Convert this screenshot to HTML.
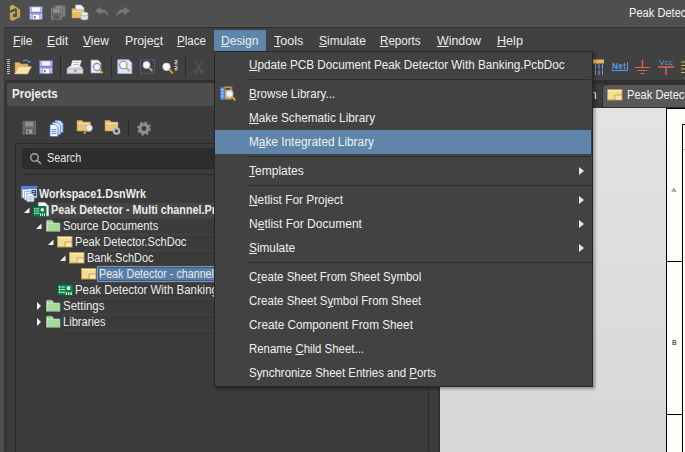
<!DOCTYPE html>
<html><head><meta charset="utf-8">
<style>
*{box-sizing:border-box;margin:0;padding:0}
html,body{width:685px;height:452px;overflow:hidden;background:#3c3c3c;font-family:"Liberation Sans","DejaVu Sans",sans-serif;font-size:12px;color:#e6e6e6}
.abs{position:absolute}
.sx{display:inline-block;transform-origin:0 0;white-space:nowrap}
svg{position:absolute;overflow:visible}
#title{left:0;top:0;width:685px;height:27px;background:#4f4f4f;border-bottom:1px solid #535353}
#tline{left:4px;top:27px;width:681px;height:1px;background:#2d2d2d}
#leftstrip{left:0;top:26px;width:4px;height:426px;background:#4f4f4f}
#menubar{left:4px;top:28px;width:681px;height:52px;background:#414141;border-left:1px solid #383838}
.mi{position:absolute;top:33px;font-size:12px;color:#ececec;white-space:nowrap;line-height:16px;}
u{text-decoration:underline;text-underline-offset:.5px;text-decoration-thickness:1px}
#designsel{left:214px;top:30px;width:52px;height:22px;background:#5f85aa}
#gap{left:4px;top:80px;width:681px;height:4px;background:#303030}
#lgap{left:4px;top:80px;width:3px;height:372px;background:#353535}
#phead{left:7px;top:83px;width:433px;height:23px;background:#4d4d4d}
#pheadt{left:11.6px;top:86px;font-weight:bold;font-size:12px;color:#f0f0f0;line-height:16px;transform:scaleX(.965);transform-origin:0 0}
#pbody{left:7px;top:106px;width:421px;height:346px;background:conic-gradient(#404040 25%,#373737 0 50%,#404040 0 75%,#373737 0) 0 0/2px 2px}
#split{left:428px;top:106px;width:12px;height:346px;background:conic-gradient(#404040 25%,#373737 0 50%,#404040 0 75%,#373737 0) 0 0/2px 2px;border-left:1px solid #2c2c2c;border-right:2px solid #303030}
#sbox{left:15px;top:143px;width:413px;height:309px;background:#3b3b3b;border-left:1px solid #2a2a2a;border-top:1px solid #2a2a2a}
#search{left:22px;top:148px;width:400px;height:21px;background:#2d2d2d;border:1px solid #272727;border-radius:4px}
#searcht{left:46.5px;top:150px;font-size:12px;color:#e6e6e6;line-height:16px;transform:scaleX(.9);transform-origin:0 0}
#sdiv{left:22px;top:174px;width:405px;height:1px;background:#2b2b2b}
.tr{position:absolute;font-size:12px;color:#ececec;white-space:nowrap;line-height:16px;height:16px}
.tr b{font-weight:bold}
#row2{left:49px;top:203px;width:380px;height:15px;background:#464646}
#selrow{left:97px;top:266px;width:340px;height:16px;background:#587ca5;border:1px solid #7799c0;box-shadow:inset 0 0 0 1px #3f5a7c}
#menu{left:214px;top:51px;width:379px;height:336px;background:#424242;border:1px solid #272727;box-shadow:2px 2px 3px rgba(0,0,0,.35)}
.m{position:absolute;left:34px;font-size:12px;color:#f0f0f0;white-space:nowrap;line-height:16px}
.sep{position:absolute;left:34px;width:342px;height:1px;background:#2c2c2c}
.arr{position:absolute;left:364px;width:0;height:0;border-left:5px solid #e6e6e6;border-top:4px solid transparent;border-bottom:4px solid transparent}
#hl{left:0;top:78px;width:376px;height:24px;background:#5f85aa}
#doc{left:440px;top:108px;width:245px;height:344px;background:linear-gradient(#e3e3e3,#d7d7d7)}
#sheet{left:666px;top:108px;width:19px;height:344px;background:#fdfdf9;border-left:1px solid #000;border-top:1px solid #000}
#tab{left:602px;top:84px;width:84px;height:24px;background:#585858;border-radius:5px 0 0 0;border:1px solid #303030;border-bottom:1px solid #2c2c2c}
.tb{position:absolute;width:1px;background:#2a2a2a;top:56px;height:22px}
</style></head><body>
<div class="abs" id="title"></div>
<div class="abs" id="leftstrip"></div>
<div class="abs" id="tline"></div>
<div class="abs" id="menubar"></div>
<div class="abs" id="designsel"></div>
<div class="mi" style="left:13.0px"><span class="sx" style="transform:scaleX(1.0073)"><u>F</u>ile</span></div>
<div class="mi" style="left:47.3px"><span class="sx" style="transform:scaleX(1.0192)"><u>E</u>dit</span></div>
<div class="mi" style="left:83.4px"><span class="sx" style="transform:scaleX(0.9995)"><u>V</u>iew</span></div>
<div class="mi" style="left:124.5px"><span class="sx" style="transform:scaleX(1.0198)">Proje<u>c</u>t</span></div>
<div class="mi" style="left:177.4px"><span class="sx" style="transform:scaleX(0.9623)"><u>P</u>lace</span></div>
<div class="mi" style="left:221.0px"><span class="sx" style="transform:scaleX(1.0011)"><u>D</u>esign</span></div>
<div class="mi" style="left:273.7px"><span class="sx" style="transform:scaleX(1.0458)"><u>T</u>ools</span></div>
<div class="mi" style="left:318.6px"><span class="sx" style="transform:scaleX(1.0042)"><u>S</u>imulate</span></div>
<div class="mi" style="left:380.2px"><span class="sx" style="transform:scaleX(0.9659)"><u>R</u>eports</span></div>
<div class="mi" style="left:437.4px"><span class="sx" style="transform:scaleX(1.0307)"><u>W</u>indow</span></div>
<div class="mi" style="left:496.5px"><span class="sx" style="transform:scaleX(1.0491)"><u>H</u>elp</span></div>
<div class="abs" style="left:628.5px;top:5px;font-size:12px;color:#f4f4f4;white-space:nowrap;line-height:16px;transform:scaleX(.925);transform-origin:0 0">Peak Detector</div>

<!-- title icons -->
<svg style="left:0;top:0" width="140" height="27" viewBox="0 0 140 27">
 <path fill-rule="evenodd" d="M9.900 6.300 L12.600 4.600 L20.100 9.400 V17 L12.400 21 L9.900 19.400 Z M9.900 10.700 L15.700 7.900 L16.900 9.400 V16.900 H12.900 V14.500 L15.200 13.400 V10.700 L9.900 13.100 Z" fill="#c6a558"/>
 <!-- save -->
 <rect x="29.500" y="6.500" width="13" height="13" fill="#bcbee8" stroke="#6a6eae" stroke-width=".9"/>
 <rect x="30" y="12" width="12" height="1.500" fill="#7478ba"/>
 <rect x="31.800" y="7" width="8.400" height="5" fill="#f6f6fb" stroke="#8a8ec8" stroke-width=".5"/>
 <rect x="32.800" y="14.700" width="6.600" height="4.800" fill="#fcfcff" stroke="#8a8ec8" stroke-width=".5"/>
 <rect x="34" y="16" width="1.600" height="2.400" fill="#6468a8"/>
 <!-- save all gray -->
 <rect x="54" y="5.800" width="11" height="10.500" fill="#686868" stroke="#7c7c7c" stroke-width=".7"/>
 <rect x="56" y="6.500" width="7" height="2" fill="#8a8a8a"/>
 <rect x="63.300" y="8" width="1.200" height="8" fill="#8a8a8a"/>
 <rect x="51.500" y="8.800" width="10" height="10.500" fill="#707070" stroke="#848484" stroke-width=".7"/>
 <rect x="53.300" y="9.300" width="6.400" height="3.500" fill="#909090"/>
 <rect x="52" y="13.300" width="9" height="1" fill="#5a5a5a"/>
 <rect x="53.800" y="15.300" width="5.400" height="4" fill="#5a5a5a"/>
 <!-- open folder db -->
 <path d="M75.500 5 h5.500 l3 3 v5 h-8.500z" fill="#eef0fa" stroke="#b4bcdc" stroke-width=".6"/>
 <path d="M72 8.500 h4 l1.200 1.500 h6.800 v8 h-12z" fill="#e6bd6c" stroke="#bb9444" stroke-width=".6"/>
 <path d="M72.500 11.500 h11" stroke="#f4dca0" stroke-width="1"/>
 <path d="M80.800 13.800 v4.600 a3.600 1.700 0 0 0 7.200 0 v-4.600z" fill="#c8ccd4" stroke="#9498a0" stroke-width=".5"/>
 <path d="M80.800 15.600 a3.600 1.700 0 0 0 7.200 0 M80.800 17.200 a3.600 1.700 0 0 0 7.200 0" fill="none" stroke="#f4f6fa" stroke-width=".7"/>
 <ellipse cx="84.400" cy="13.800" rx="3.600" ry="1.700" fill="#f0f2f6" stroke="#9a9ea6" stroke-width=".5"/>
 <!-- undo -->
 <path d="M95 10.800 L100.800 6.800 V9.300 C105.500 9.300 108.500 12 108.700 16.800 C107 14 104.800 12.600 100.800 12.600 V15 Z" fill="#777"/>
 <path d="M130 10.800 L124.200 6.800 V9.300 C119.500 9.300 116.500 12 116.300 16.800 C118 14 120.200 12.600 124.200 12.600 V15 Z" fill="#777"/>
</svg>

<!-- toolbar -->
<svg style="left:0;top:54px" width="215" height="26" viewBox="0 54 215 26">
 <g fill="#bdbdbd"><rect x="7" y="59" width="3" height="1"/><rect x="7" y="61" width="3" height="1"/><rect x="7" y="63" width="3" height="1"/><rect x="7" y="65" width="3" height="1"/><rect x="7" y="67" width="3" height="1"/><rect x="7" y="69" width="3" height="1"/><rect x="7" y="71" width="3" height="1"/><rect x="7" y="73" width="3" height="1"/></g>
 <!-- open -->
 <path d="M15 62.500 h4.500 l1.500 1.500 h7 v9.500 h-13z" fill="#e0b465" stroke="#b58c3c" stroke-width=".6"/>
 <path d="M18 66.500 h13.500 l-3.800 7.500 h-13z" fill="#f8e3b0" stroke="#c9a152" stroke-width=".6"/>
 <path d="M23 60.800 q4 -2.200 6.500 1.500" fill="none" stroke="#86a8e0" stroke-width=".9"/>
 <path d="M28.300 62 l1.800 1 l.6 -2z" fill="#86a8e0"/>
 <!-- save -->
 <rect x="39.500" y="60.500" width="13" height="13" fill="#bcbee8" stroke="#6a6eae" stroke-width=".9"/>
 <rect x="40" y="66" width="12" height="1.500" fill="#7478ba"/>
 <rect x="41.800" y="61" width="8.400" height="5" fill="#f1f1f8" stroke="#8a8ec8" stroke-width=".5"/>
 <rect x="42.800" y="68.700" width="6.600" height="4.800" fill="#fcfcff" stroke="#8a8ec8" stroke-width=".5"/>
 <rect x="44" y="70" width="1.600" height="2.400" fill="#6468a8"/>
 <rect x="60" y="56" width="1" height="22" fill="#2a2a2a"/>
 <!-- print -->
 <path d="M69 66.500 h12 l2 2.500 h-16z" fill="#ececf2" stroke="#a8a8b4" stroke-width=".5"/>
 <path d="M72.500 60.500 h9 l-2 6.500 h-9z" fill="#fdfdfd" stroke="#b4b4bc" stroke-width=".5"/>
 <path d="M73.500 62.500 h6 M73 64.500 h6" stroke="#9a9aa2" stroke-width=".7"/>
 <rect x="67" y="69" width="16" height="4.800" fill="#dcdce4" stroke="#9c9ca8" stroke-width=".6"/>
 <rect x="67" y="72.800" width="16" height="1.200" fill="#a4a4b0"/>
 <rect x="74" y="70.300" width="2.500" height="1.200" fill="#6a6a78"/>
 <!-- preview -->
 <path d="M91 60 h7 l3 3 v10 h-10z" fill="#f0f2fa" stroke="#9aa2c8" stroke-width=".7"/>
 <circle cx="97" cy="67" r="3.6" fill="#e8f0ff" stroke="#8a8a9a" stroke-width="1.2"/>
 <path d="M99.700 70 l3 3.200" stroke="#d6a040" stroke-width="2"/>
 <rect x="111" y="56" width="1" height="22" fill="#2a2a2a"/>
 <!-- zoom doc -->
 <path d="M117.800 59.800 h11 l3 3 v10.700 h-14z" fill="#dde6fa" stroke="#a8b8e4" stroke-width=".8"/>
 <circle cx="123.300" cy="65" r="3.700" fill="#f6f9ff" stroke="#8c8c9c" stroke-width="1.100"/>
 <path d="M126 67.800 l3.800 3.500" stroke="#d8a448" stroke-width="1.900"/>
 <!-- zoom area -->
 <rect x="140.400" y="59.800" width="14" height="13.500" fill="none" stroke="#5a72d0" stroke-width=".9" stroke-dasharray="1.600 1.200"/>
 <circle cx="146.500" cy="65" r="3.400" fill="#f6f9ff" stroke="#d0d0d8" stroke-width="1"/>
 <path d="M149 67.600 l3.400 3.400" stroke="#d8a448" stroke-width="1.800"/>
 <!-- zoom sel -->
 <circle cx="166.500" cy="66.800" r="3.700" fill="#f6f9ff" stroke="#d0d0d8" stroke-width="1"/>
 <path d="M169.200 69.600 l3.800 3.700" stroke="#d8a448" stroke-width="1.900"/>
 <g fill="none" stroke="#ecd080" stroke-width="1"><path d="M174.500 60.500 h2.500 v2 h-2 v1.500 h2.500"/><path d="M174.500 66.500 h2.500 v2 h-2 v1.500 h2.500"/></g>
 <rect x="185" y="56" width="1" height="22" fill="#2a2a2a"/>
 <!-- cut -->
 <path d="M195 61 L200.500 70.500 M202.500 61 L197 70.500" stroke="#5e5e5e" stroke-width="1" fill="none"/>
 <circle cx="195.500" cy="72" r="1.800" fill="none" stroke="#5e5e5e" stroke-width="1"/>
 <circle cx="202" cy="72" r="1.800" fill="none" stroke="#5e5e5e" stroke-width="1"/>
</svg>

<!-- right toolbar icons -->
<svg style="left:593px;top:54px" width="92" height="26" viewBox="593 54 92 26">
 <rect x="593" y="59.500" width="11" height="4" fill="#e8b85a"/>
 <g stroke="#6aa0e8" stroke-width="1" stroke-dasharray="5 1"><path d="M595.500 64 v11 M599 64 v11 M602.500 64 v11"/></g>
 <text x="612" y="68.800" font-size="8.200" font-weight="bold" fill="#5b9be6" font-family="Liberation Sans, sans-serif" textLength="14">Net</text>
 <path d="M611.500 70.500 h16 v-8.500" fill="none" stroke="#5b9be6" stroke-width="1"/>
 <g stroke="#e26552" stroke-width="1.200" fill="none"><path d="M642.500 60 v7.500 M635 67.500 h15 M638 70.500 h9 M640.500 73.500 h4"/></g>
 <text x="659.300" y="64.600" font-size="7.200" fill="#5b9be6" font-family="Liberation Sans, sans-serif" textLength="13.500" lengthAdjust="spacingAndGlyphs">Vcc</text>
 <g stroke="#e26552" stroke-width="1.400" fill="none"><path d="M658 67 h16 M666 67 v8"/></g>
 <g stroke="#d8b050" stroke-width="1.200"><path d="M681 62 h4 M681 65.500 h4 M681 69 h4 M681 72.500 h4"/></g>
</svg>

<div class="abs" id="gap"></div>
<div class="abs" id="lgap"></div>
<div class="abs" id="phead"></div>
<div class="abs" id="pheadt">Projects</div>
<div class="abs" id="pbody"></div>
<div class="abs" id="split"></div>
<div class="abs" id="sbox"></div>

<!-- panel toolbar -->
<svg style="left:15px;top:115px" width="150" height="26" viewBox="15 115 150 26">
 <rect x="23" y="121.300" width="12.500" height="12.700" fill="#5c5c5c" stroke="#767676" stroke-width=".9"/>
 <rect x="25" y="122" width="8.500" height="4.600" fill="#8e8e8e"/>
 <rect x="23.500" y="127.200" width="11.500" height="1.200" fill="#6e6e6e"/>
 <rect x="26" y="129.300" width="6.500" height="4.400" fill="#9a9a9a"/>
 <rect x="27.300" y="130.300" width="1.800" height="2.600" fill="#5a5a5a"/>
 <!-- docs -->
 <path d="M55 120.500 h5 l3 3 v9 h-8z" fill="#c8dcf8" stroke="#5a84d0" stroke-width=".8"/>
 <path d="M52.500 122.500 h5 l3 3 v9 h-8z" fill="#dce8fc" stroke="#5a84d0" stroke-width=".8"/>
 <path d="M50 124.500 h5 l3 3 v9 h-8z" fill="#f0f6ff" stroke="#4a74c8" stroke-width=".8"/>
 <path d="M51.500 129.500 h5 M51.500 131.500 h5 M51.500 133.500 h5" stroke="#4a74c8" stroke-width=".8"/>
 <!-- folder search -->
 <path d="M77 120.500 h5 l1.500 1.500 h7 v9 h-13.500z" fill="#e8c47a" stroke="#b8923f" stroke-width=".6"/>
 <path d="M77.500 123.500 h12.500" stroke="#f6e0a8" stroke-width="1"/>
 <circle cx="89" cy="128" r="3.300" fill="#e8eef8" stroke="#b8b8c0" stroke-width="1"/>
 <path d="M86.800 130.500 l-3 3.200" stroke="#d6a040" stroke-width="1.600"/>
 <!-- folder gear -->
 <path d="M105 120.500 h5 l1.500 1.500 h6.500 v9 h-13z" fill="#e8c47a" stroke="#b8923f" stroke-width=".6"/>
 <path d="M105.500 123.500 h12" stroke="#f6e0a8" stroke-width="1"/>
 <circle cx="116.500" cy="131" r="2.800" fill="#4a4a4a" stroke="#b8b8b8" stroke-width="2"/>
 <rect x="128" y="120" width="1" height="16" fill="#262626"/>
 <!-- gear -->
 <circle cx="144" cy="128.500" r="4" fill="none" stroke="#8e8e8e" stroke-width="3.200"/>
 <circle cx="144" cy="128.500" r="6" fill="none" stroke="#8e8e8e" stroke-width="2" stroke-dasharray="2.300 2.410"/>
</svg>

<div class="abs" id="search"></div>
<svg style="left:28.7px;top:152px" width="14" height="14" viewBox="0 0 14 14"><circle cx="5.500" cy="5.500" r="3.800" fill="none" stroke="#a0a0a0" stroke-width="1.500"/><path d="M8.300 8.300 L12 12" stroke="#a0a0a0" stroke-width="1.700"/></svg>
<div class="abs" id="searcht">Search</div>
<div class="abs" id="sdiv"></div>

<div class="abs" style="left:61px;top:218px;width:367px;height:1px;background:#454545"></div>
<div class="abs" style="left:73px;top:234px;width:355px;height:1px;background:#454545"></div>
<div class="abs" style="left:85px;top:250px;width:343px;height:1px;background:#454545"></div>
<div class="abs" style="left:73px;top:282px;width:355px;height:1px;background:#454545"></div>
<div class="abs" style="left:61px;top:298px;width:367px;height:1px;background:#454545"></div>
<div class="abs" style="left:61px;top:314px;width:367px;height:1px;background:#454545"></div>
<div class="abs" style="left:61px;top:330px;width:367px;height:1px;background:#454545"></div>
<div class="abs" id="row2"></div>
<div class="abs" id="selrow"></div>
<div class="tr" style="left:38.9px;top:186px"><span class="sx" style="transform:scaleX(0.8987)"><b>Workspace1.DsnWrk</b></span></div>
<div class="tr" style="left:50.8px;top:202px"><span class="sx" style="transform:scaleX(0.8991)"><b>Peak Detector - Multi channel.PrjPcb</b></span></div>
<div class="tr" style="left:62.9px;top:218px"><span class="sx" style="transform:scaleX(0.9339)">Source Documents</span></div>
<div class="tr" style="left:75.4px;top:234px"><span class="sx" style="transform:scaleX(0.9227)">Peak Detector.SchDoc</span></div>
<div class="tr" style="left:87.4px;top:250px"><span class="sx" style="transform:scaleX(0.9147)">Bank.SchDoc</span></div>
<div class="tr" style="left:99.4px;top:266px"><span class="sx" style="transform:scaleX(0.8928)">Peak Detector - channel.SchDoc</span></div>
<div class="tr" style="left:75.4px;top:282px"><span class="sx" style="transform:scaleX(0.9518)">Peak Detector With Banking.PcbDoc</span></div>
<div class="tr" style="left:62.9px;top:298px"><span class="sx" style="transform:scaleX(0.9571)">Settings</span></div>
<div class="tr" style="left:62.8px;top:314px"><span class="sx" style="transform:scaleX(0.9255)">Libraries</span></div>

<!-- tree icons -->
<svg style="left:15px;top:180px" width="100" height="150" viewBox="15 180 100 150">
 <!-- workspace -->
 <rect x="21.800" y="186.300" width="15" height="11.500" fill="#e4ecfb" stroke="#8aa6e0" stroke-width=".7"/>
 <rect x="31.500" y="190" width="4.500" height="6" fill="#3c4050"/>
 <path d="M32.500 191.500 h2.500 M32.500 193.500 h2.500" stroke="#e8eefc" stroke-width=".8"/>
 <rect x="21.500" y="186" width="15.600" height="3" fill="#4f7fe4"/>
 <path d="M22.500 189.500 h5.500 l2 2 v6.500 h-7.500z" fill="#f8faff" stroke="#7f9ad4" stroke-width=".7"/>
 <path d="M24.500 191.500 h5.500 l2 2 v6.500 h-7.500z" fill="#f8faff" stroke="#7f9ad4" stroke-width=".7"/>
 <path d="M26.800 193.300 h5 l2.200 2.200 v6.200 h-7.200z" fill="#fbfcff" stroke="#6f8acc" stroke-width=".7"/>
 <path d="M28.200 196.500 h4.500 M28.200 198.200 h4.500 M28.200 199.900 h4.500" stroke="#7f9ad4" stroke-width=".7"/>
 <!-- project -->
 <g transform="translate(24 207.500)"><path d="M5.500 0 V5.500 H0 Z" fill="#f4f4f4"/></g>
 <path d="M38.500 202.500 h6.500 l3.500 3.500 v10 h-10z" fill="#f4f6fc" stroke="#c0c8dc" stroke-width=".7"/>
 <g transform="translate(33 206.500)"><rect x="0" y="0" width="13" height="9.600" fill="#0f7d48" stroke="#0a5e36" stroke-width=".8"/><path d="M1.200 2.300 h1.300 M1.200 4.600 h1.300 M1.200 6.900 h1.300" stroke="#f4fff6" stroke-width="1.300"/><path d="M3.200 2.300 h3 M3.200 4.600 h3 M3.200 6.900 h3" stroke="#d8f2de" stroke-width=".9"/><rect x="7.800" y="1.800" width="3" height="3" fill="#e4f6e8"/><path d="M7.500 7 v2.300 M9.500 7 v2.300 M11.500 7 v2.300" stroke="#f4fff6" stroke-width="1"/></g>
 <g transform="translate(36 223.500)"><path d="M5.500 0 V5.500 H0 Z" fill="#f4f4f4"/></g>
 <g transform="translate(46.500 220)"><path d="M0 1.200 q0 -1 1 -1 h4 q.8 0 1.200 .800 l.900 2 h5.400 q1 0 1 1 v7.300 h-13.500z" fill="#a9d7a0" stroke="#8cc084" stroke-width=".7"/><path d="M0.700 1.500 v9.300" stroke="#d2f0ca" stroke-width=".8"/><path d="M1 3.500 h12" stroke="#bfe4b6" stroke-width=".8"/></g>
 <g transform="translate(48 239.500)"><path d="M5.500 0 V5.500 H0 Z" fill="#f4f4f4"/></g>
 <g transform="translate(57.500 236.500)"><rect x="0" y="0" width="14.500" height="10.500" fill="#f2dc94" stroke="#b89c58" stroke-width="1"/><rect x="0.500" y="0.500" width="13.500" height="1.500" fill="#f9ebb4"/><path d="M7.500 10.500 V5.500 H14.500" fill="none" stroke="#b89c58" stroke-width=".9"/><rect x="8" y="6" width="6" height="4" fill="#edd080"/><path d="M9 7.300 h4.800 M9 9 h4.800" stroke="#fffbe8" stroke-width=".9"/></g>
 <g transform="translate(60 255.500)"><path d="M5.500 0 V5.500 H0 Z" fill="#f4f4f4"/></g>
 <g transform="translate(69.500 252.500)"><rect x="0" y="0" width="14.500" height="10.500" fill="#f2dc94" stroke="#b89c58" stroke-width="1"/><rect x="0.500" y="0.500" width="13.500" height="1.500" fill="#f9ebb4"/><path d="M7.500 10.500 V5.500 H14.500" fill="none" stroke="#b89c58" stroke-width=".9"/><rect x="8" y="6" width="6" height="4" fill="#edd080"/><path d="M9 7.300 h4.800 M9 9 h4.800" stroke="#fffbe8" stroke-width=".9"/></g>
 <g transform="translate(81.500 268.500)"><rect x="0" y="0" width="14.500" height="10.500" fill="#f2dc94" stroke="#b89c58" stroke-width="1"/><rect x="0.500" y="0.500" width="13.500" height="1.500" fill="#f9ebb4"/><path d="M7.500 10.500 V5.500 H14.500" fill="none" stroke="#b89c58" stroke-width=".9"/><rect x="8" y="6" width="6" height="4" fill="#edd080"/><path d="M9 7.300 h4.800 M9 9 h4.800" stroke="#fffbe8" stroke-width=".9"/></g>
 <g transform="translate(57.400 284.300) scale(1.200 1.150)"><g><rect x="0" y="0" width="13" height="9.600" fill="#0f7d48" stroke="#0a5e36" stroke-width=".8"/><path d="M1.200 2.300 h1.300 M1.200 4.600 h1.300 M1.200 6.900 h1.300" stroke="#f4fff6" stroke-width="1.300"/><path d="M3.200 2.300 h3 M3.200 4.600 h3 M3.200 6.900 h3" stroke="#d8f2de" stroke-width=".9"/><rect x="7.800" y="1.800" width="3" height="3" fill="#e4f6e8"/><path d="M7.500 7 v2.300 M9.500 7 v2.300 M11.500 7 v2.300" stroke="#f4fff6" stroke-width="1"/></g></g>
 <g transform="translate(37 302)"><path d="M0 0 L4 4 L0 8 Z" fill="#f4f4f4"/></g>
 <g transform="translate(46.500 300)"><path d="M0 1.200 q0 -1 1 -1 h4 q.8 0 1.200 .800 l.900 2 h5.400 q1 0 1 1 v7.300 h-13.500z" fill="#a9d7a0" stroke="#8cc084" stroke-width=".7"/><path d="M0.700 1.500 v9.300" stroke="#d2f0ca" stroke-width=".8"/><path d="M1 3.500 h12" stroke="#bfe4b6" stroke-width=".8"/></g>
 <g transform="translate(37 318)"><path d="M0 0 L4 4 L0 8 Z" fill="#f4f4f4"/></g>
 <g transform="translate(46.500 316)"><path d="M0 1.200 q0 -1 1 -1 h4 q.8 0 1.200 .800 l.900 2 h5.400 q1 0 1 1 v7.300 h-13.500z" fill="#a9d7a0" stroke="#8cc084" stroke-width=".7"/><path d="M0.700 1.500 v9.300" stroke="#d2f0ca" stroke-width=".8"/><path d="M1 3.500 h12" stroke="#bfe4b6" stroke-width=".8"/></g>
</svg>

<div class="abs" id="tab"></div>
<svg style="left:607px;top:88.5px" width="16" height="12" viewBox="-0.500 -0.500 16 12"><g><rect x="0" y="0" width="14.500" height="10.500" fill="#f2dc94" stroke="#b89c58" stroke-width="1"/><rect x="0.500" y="0.500" width="13.500" height="1.500" fill="#f9ebb4"/><path d="M7.500 10.500 V5.500 H14.500" fill="none" stroke="#b89c58" stroke-width=".9"/><rect x="8" y="6" width="6" height="4" fill="#edd080"/><path d="M9 7.300 h4.800 M9 9 h4.800" stroke="#fffbe8" stroke-width=".9"/></g></svg>
<div class="abs" style="left:590px;top:87px;font-size:12px;color:#f4f4f4;line-height:16px">n</div>
<div class="abs" style="left:627px;top:87px;font-size:12px;color:#f4f4f4;white-space:nowrap;line-height:16px;transform:scaleX(.925);transform-origin:0 0">Peak Detector</div>
<div class="abs" id="doc"></div>
<div class="abs" id="sheet"></div>
<svg style="left:666px;top:108px" width="19" height="344" viewBox="666 108 19 344">
 <path d="M685 124.500 H682.500 V452" fill="none" stroke="#000" stroke-width="1"/>
 <path d="M667 261.500 h15.500 M667 414.500 h15.500" stroke="#000" stroke-width="1"/>
 <path d="M683 149.500 h2" stroke="#bbb" stroke-width="1"/>
 <text x="671.3" y="191.500" font-size="6.800" fill="#444" font-family="Liberation Serif, serif">A</text>
 <text x="672" y="344.800" font-size="6.300" fill="#555" font-weight="bold" font-family="Liberation Sans, sans-serif">B</text>
</svg>

<div class="abs" id="menu">
<div class="abs" id="hl"></div>
<div class="m" style="left:33.9px;top:5px"><span class="sx" style="transform:scaleX(0.9753)"><u>U</u>pdate PCB Document Peak Detector With Banking.PcbDoc</span></div>
<div class="m" style="left:33.9px;top:34px"><span class="sx" style="transform:scaleX(0.9657)"><u>B</u>rowse Library...</span></div>
<div class="m" style="left:33.9px;top:58px"><span class="sx" style="transform:scaleX(0.9789)"><u>M</u>ake Schematic Library</span></div>
<div class="m" style="left:33.9px;top:82px"><span class="sx" style="transform:scaleX(0.9862)">M<u>a</u>ke Integrated Library</span></div>
<div class="m" style="left:33.9px;top:111px"><span class="sx" style="transform:scaleX(1.0018)"><u>T</u>emplates</span></div>
<div class="m" style="left:33.9px;top:140px"><span class="sx" style="transform:scaleX(0.9866)"><u>N</u>etlist For Project</span></div>
<div class="m" style="left:33.9px;top:164px"><span class="sx" style="transform:scaleX(1.0016)">N<u>e</u>tlist For Document</span></div>
<div class="m" style="left:33.9px;top:188px"><span class="sx" style="transform:scaleX(0.9849)"><u>S</u>imulate</span></div>
<div class="m" style="left:33.9px;top:217px"><span class="sx" style="transform:scaleX(0.9567)">C<u>r</u>eate Sheet From Sheet Symbol</span></div>
<div class="m" style="left:33.9px;top:241px"><span class="sx" style="transform:scaleX(0.9566)">Create Sheet S<u>y</u>mbol From Sheet</span></div>
<div class="m" style="left:33.9px;top:265px"><span class="sx" style="transform:scaleX(0.9790)">Create Component From Sheet</span></div>
<div class="m" style="left:33.9px;top:289px"><span class="sx" style="transform:scaleX(0.9524)">Rename <u>C</u>hild Sheet...</span></div>
<div class="m" style="left:33.9px;top:313px"><span class="sx" style="transform:scaleX(0.9539)">Synchronize Sheet Entries and <u>P</u>orts</span></div>
<div class="sep" style="top:27px"></div>
<div class="sep" style="top:104px"></div>
<div class="arr" style="top:115px"></div>
<div class="sep" style="top:133px"></div>
<div class="arr" style="top:144px"></div>
<div class="arr" style="top:168px"></div>
<div class="arr" style="top:192px"></div>
<div class="sep" style="top:210px"></div>
<svg style="left:5px;top:33.5px" width="17" height="16" viewBox="0 0 17 16">
 <rect x="4" y="0.800" width="8" height="12.500" fill="#c9a45c" stroke="#9a7a3a" stroke-width=".8"/>
 <rect x="5.500" y="2" width="5" height="2" fill="#4a4a4a"/>
 <rect x="0.300" y="1.500" width="4" height="12" fill="#5f8fe0" stroke="#3f6cc0" stroke-width=".6"/>
 <path d="M0.800 4 h3 M0.800 7 h3 M0.800 10 h3" stroke="#b8d0f8" stroke-width="1"/>
 <circle cx="9.500" cy="7.800" r="3.400" fill="#f0f4fc" stroke="#c8c8d0" stroke-width="1.200"/>
 <path d="M12 10.500 l3.300 3.600" stroke="#e0a848" stroke-width="1.900"/>
</svg>
</div>
</body></html>
